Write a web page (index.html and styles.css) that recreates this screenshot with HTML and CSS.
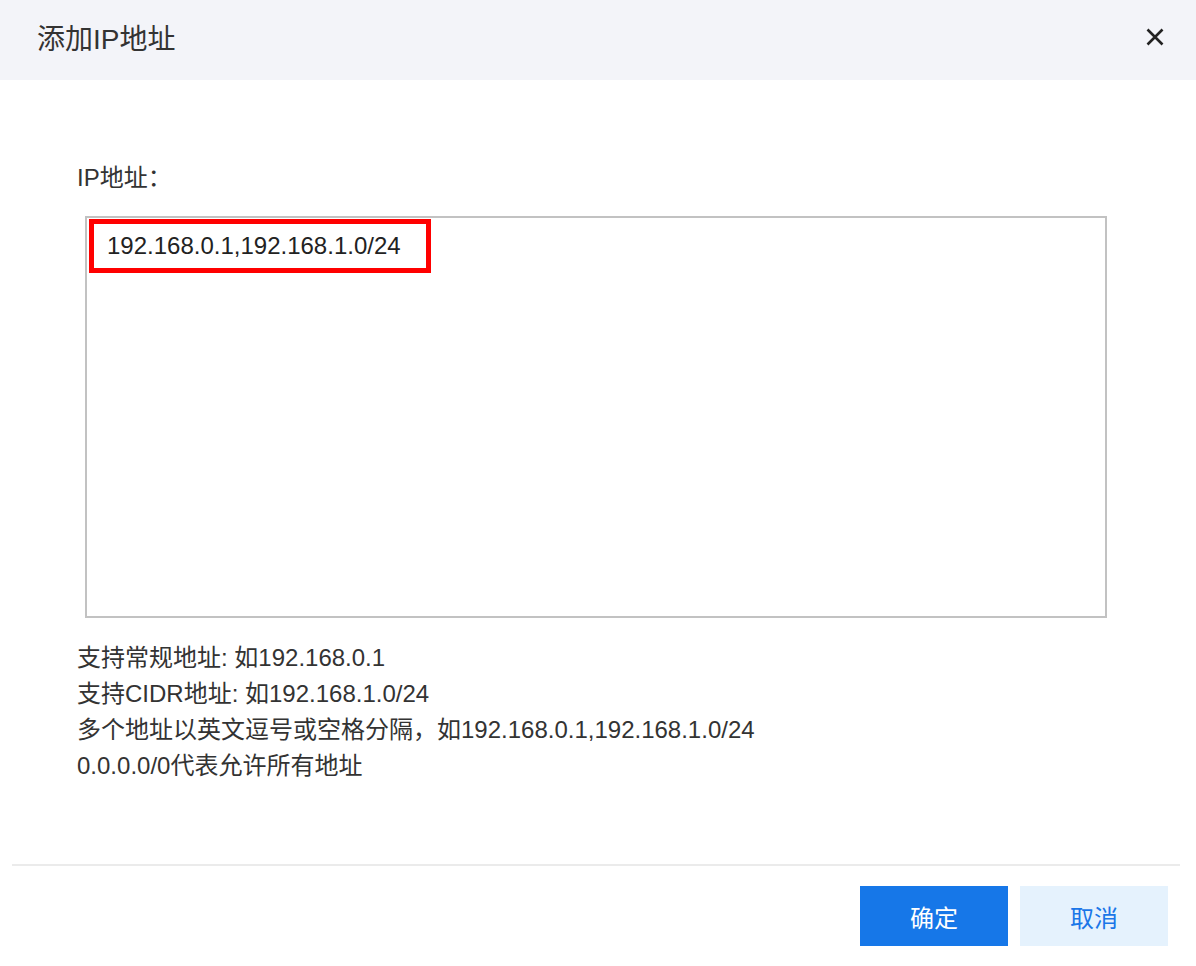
FILE: index.html
```
<!DOCTYPE html>
<html lang="zh-CN">
<head>
<meta charset="utf-8">
<title>添加IP地址</title>
<link rel="stylesheet" href="styles.css">
</head>
<body>
<div class="dialog">
  <div class="dialog-header">
    <h1 class="dialog-title">添加IP地址</h1>
    <button class="close-btn" aria-label="关闭">
      <svg width="18" height="18" viewBox="0 0 18 18"><path d="M1.5 1.5 L16.5 16.5 M16.5 1.5 L1.5 16.5" stroke="#222" stroke-width="2.6" fill="none"/></svg>
    </button>
  </div>
  <div class="dialog-body">
    <div class="field-label">IP地址：</div>
    <div class="ip-input">
      <span class="ip-highlight">192.168.0.1,192.168.1.0/24</span>
    </div>
    <div class="help">
      <div>支持常规地址: 如192.168.0.1</div>
      <div>支持CIDR地址: 如192.168.1.0/24</div>
      <div>多个地址以英文逗号或空格分隔，如192.168.0.1,192.168.1.0/24</div>
      <div>0.0.0.0/0代表允许所有地址</div>
    </div>
  </div>
  <div class="dialog-footer">
    <button class="btn btn-primary">确定</button>
    <button class="btn btn-secondary">取消</button>
  </div>
</div>
</body>
</html>
```
FILE: styles.css
```
* { box-sizing: border-box; }
html, body { margin: 0; padding: 0; background: #fff; }
body {
  font-family: "Liberation Sans", "Noto Sans CJK SC", sans-serif;
  color: #333;
  width: 1196px;
  height: 966px;
  overflow: hidden;
}
.dialog { display: flex; flex-direction: column; height: 966px; }
.dialog-header {
  height: 80px;
  background: #f3f4f9;
  display: flex;
  align-items: center;
  justify-content: space-between;
  padding: 0 32px 0 37px;
}
.dialog-title {
  margin: 0;
  font-size: 28px;
  font-weight: normal;
  color: #333;
  line-height: 40px;
}
.close-btn {
  border: 0;
  background: transparent;
  padding: 0;
  width: 18px;
  height: 18px;
  margin-top: -6px;
  display: flex;
  cursor: pointer;
}
.dialog-body {
  padding: 80px 0 0 77px;
  flex: 1;
}
.field-label {
  font-size: 24px;
  line-height: 36px;
}
.ip-input {
  margin: 20px 0 0 8px;
  width: 1022px;
  height: 402px;
  border: 2px solid #c2c2c2;
  padding: 1px 0 0 2px;
}
.ip-highlight {
  display: inline-block;
  width: 342px;
  height: 54px;
  border: 5px solid #ff0000;
  padding-left: 13px;
  font-size: 24px;
  line-height: 44px;
  color: #222;
}
.help {
  margin-top: 22px;
  font-size: 24px;
  line-height: 36px;
}
.dialog-footer {
  margin: 0 16px 20px 12px;
  border-top: 2px solid #ebebeb;
  padding: 20px 12px 0 0;
  display: flex;
  justify-content: flex-end;
  gap: 12px;
}
.btn {
  width: 148px;
  height: 60px;
  border: 0;
  font-family: "Liberation Sans", "Noto Sans CJK SC", sans-serif;
  font-size: 24px;
  cursor: pointer;
}
.btn-primary { background: #1677e8; color: #fff; }
.btn-secondary { background: #e5f2fd; color: #1a76e8; }
```
